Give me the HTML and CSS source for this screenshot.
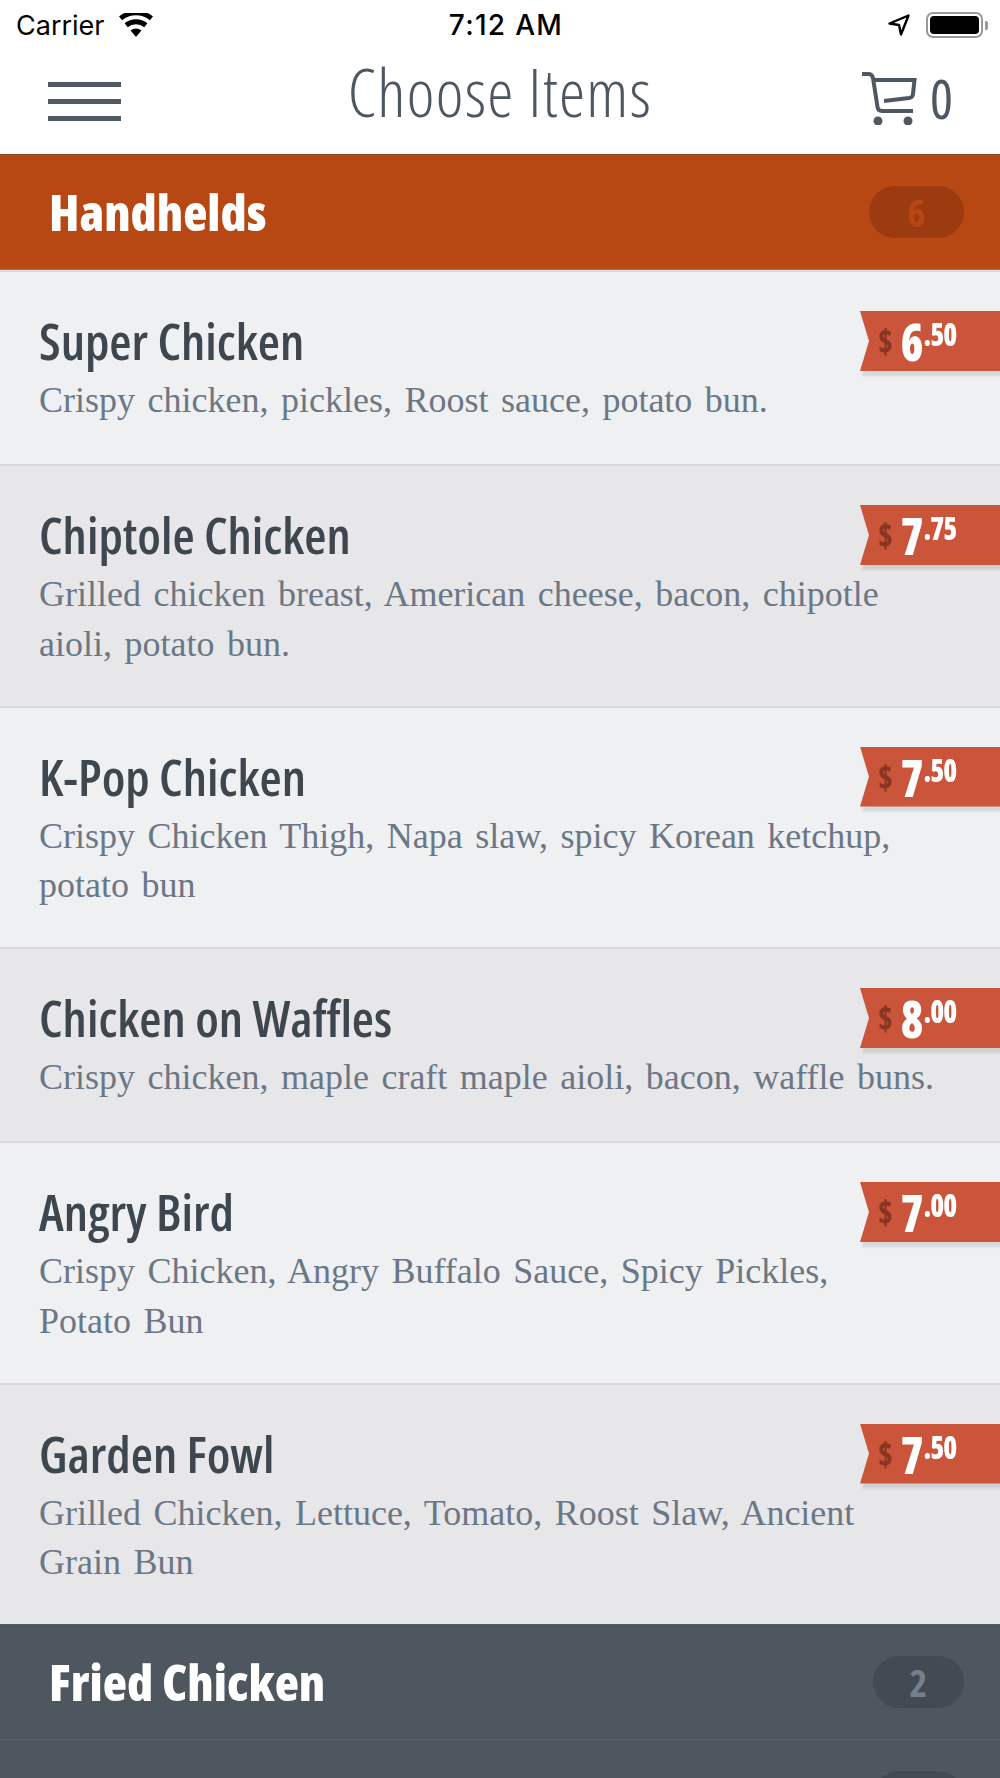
FILE: index.html
```html
<!DOCTYPE html>
<html lang="en">
<head>
<meta charset="utf-8">
<title>Choose Items</title>
<link rel="stylesheet" href="styles.css">
</head>
<body>
<div class="status">
  <div class="status-left"><span>Carrier</span>
    <svg class="wifi" viewBox="0 0 34 24"><path d="M17 24 11.6 17.4a8.6 8.6 0 0 1 10.8 0Z"/><path d="M8.8 14.2 5.6 10.3a18 18 0 0 1 22.8 0l-3.200 3.900a13 13 0 0 0-16.400 0Z"/><path d="M3.100 7.300 0 3.500a26.800 26.800 0 0 1 34 0l-3.100 3.800a22 22 0 0 0-27.800 0Z"/></svg>
  </div>
  <div class="status-time">7:12 AM</div>
  <div class="status-right">
    <svg class="loc" viewBox="0 0 22 22"><path d="M1.500 9.500 20.500 1.500 13 20.500 11 11Z" fill="none" stroke="#000" stroke-width="2.400" stroke-linejoin="round"/></svg>
    <div class="battery"><div class="battery-fill"></div></div><div class="battery-nub"></div>
  </div>
</div>
<header class="nav">
  <div class="burger"><i></i><i></i><i></i></div>
  <h1 class="nav-title">Choose Items</h1>
  <div class="cart">
    <svg class="cart-icon" viewBox="0 0 56 54"><path d="M1 3H7C10 3 11.500 4 12 7L16.500 36C16.800 38 18 40 21 40H52M13 9H53.500L52 23C51.800 26 50.500 26.500 48 27L23 30" fill="none" stroke="#4e5862" stroke-width="4"/><circle cx="17" cy="50" r="4.500" fill="#4e5862"/><circle cx="47" cy="50" r="4.500" fill="#4e5862"/></svg>
    <span class="cart-count">0</span>
  </div>
</header>
<main>
  <section class="sec sec-orange"><h2 class="sec-name">Handhelds</h2><span class="pill">6</span></section>
  <article class="item">
    <h3 class="item-name">Super Chicken</h3>
    <p class="item-desc">Crispy chicken, pickles, Roost sauce, potato bun.</p>
    <div class="tag-wrap"><div class="tag"><div class="price"><span class="cur">$</span><span class="big">6</span><span class="cents">.50</span></div></div></div>
  </article>
  <article class="item alt two-line">
    <h3 class="item-name">Chiptole Chicken</h3>
    <p class="item-desc">Grilled chicken breast, American cheese, bacon, chipotle<br>aioli, potato bun.</p>
    <div class="tag-wrap"><div class="tag"><div class="price"><span class="cur">$</span><span class="big">7</span><span class="cents">.75</span></div></div></div>
  </article>
  <article class="item two-line">
    <h3 class="item-name">K-Pop Chicken</h3>
    <p class="item-desc">Crispy Chicken Thigh, Napa slaw, spicy Korean ketchup,<br>potato bun</p>
    <div class="tag-wrap"><div class="tag"><div class="price"><span class="cur">$</span><span class="big">7</span><span class="cents">.50</span></div></div></div>
  </article>
  <article class="item alt">
    <h3 class="item-name">Chicken on Waffles</h3>
    <p class="item-desc">Crispy chicken, maple craft maple aioli, bacon, waffle buns.</p>
    <div class="tag-wrap"><div class="tag"><div class="price"><span class="cur">$</span><span class="big">8</span><span class="cents">.00</span></div></div></div>
  </article>
  <article class="item two-line">
    <h3 class="item-name">Angry Bird</h3>
    <p class="item-desc">Crispy Chicken, Angry Buffalo Sauce, Spicy Pickles,<br>Potato Bun</p>
    <div class="tag-wrap"><div class="tag"><div class="price"><span class="cur">$</span><span class="big">7</span><span class="cents">.00</span></div></div></div>
  </article>
  <article class="item alt two-line">
    <h3 class="item-name">Garden Fowl</h3>
    <p class="item-desc">Grilled Chicken, Lettuce, Tomato, Roost Slaw, Ancient<br>Grain Bun</p>
    <div class="tag-wrap"><div class="tag"><div class="price"><span class="cur">$</span><span class="big">7</span><span class="cents">.50</span></div></div></div>
  </article>
  <section class="sec sec-slate"><h2 class="sec-name">Fried Chicken</h2><span class="pill">2</span></section>
  <section class="sec sec-slate"><h2 class="sec-name"></h2><span class="pill"></span></section>
</main>
</body>
</html>
```

FILE: styles.css
```css
* { box-sizing: border-box; margin: 0; padding: 0; }
html, body { height: 1778px; overflow: hidden; background: #fff; }
body { font-family: "Open Sans", "Liberation Sans", sans-serif; }

.status { height: 50px; display: flex; align-items: center; justify-content: space-between; padding: 0 12px 0 16px; position: relative; font-family: "Inter", "Liberation Sans", sans-serif; color: #000; }
.status-left { display: flex; align-items: center; gap: 14px; font-size: 27px; }
.wifi { width: 34px; height: 24px; fill: #000; }
.status-time { position: absolute; left: 0; right: 0; padding-left: 12px; text-align: center; font-size: 28px; font-weight: 500; letter-spacing: 1.3px; }
.status-right { display: flex; align-items: center; }
.loc { width: 22px; height: 22px; margin-right: 16px; }
.battery { width: 57px; height: 26px; border: 2px solid #999; border-radius: 7px; padding: 2px; }
.battery-fill { height: 100%; background: #000; border-radius: 4px; }
.battery-nub { width: 3px; height: 9px; background: #999; margin-left: 2px; border-radius: 0 2px 2px 0; }

.nav { height: 105px; display: flex; align-items: center; justify-content: space-between; padding: 0 47px 8px 48px; position: relative; border-bottom: 1px solid #8a4a2a; }
.burger { width: 73px; height: 39px; display: flex; flex-direction: column; justify-content: space-between; margin-top: 6px; }
.burger i { display: block; height: 5px; background: #505a64; }
.nav-title { position: absolute; left: 0; right: 0; text-align: center; font-size: 66px; line-height: 80px; padding-bottom: 14px; font-weight: 300; font-stretch: 75%; letter-spacing: 1.3px; color: #4d5761; }
.cart { display: flex; align-items: center; gap: 13px; }
.cart-icon { width: 56px; height: 54px; }
.cart-count { font-size: 54px; line-height: 54px; font-weight: 500; font-stretch: 75%; color: #4e5862; }

.sec { height: 115px; display: flex; align-items: center; justify-content: space-between; padding: 0 36px 0 49px; }
.sec-orange { background: #b84813; border-bottom: 1px solid #c8643c; }
.sec-slate { background: #4e5660; border-top: 1px solid #565e68; }
.sec-name { font-size: 50px; line-height: 60px; font-weight: 800; font-stretch: 75%; color: #fff; }
.pill { width: 95px; height: 52px; border-radius: 26px; display: flex; align-items: center; justify-content: center; font-size: 38px; font-weight: 700; font-stretch: 75%; }
.sec-orange .pill { background: #9c3b10; color: #b84813; }
.sec-slate .pill { width: 91px; background: #434a53; color: #74808c; }

.item { position: relative; background: #eff0f2; border-top: 2px solid #d8d9db; padding: 33px 40px 38.5px 39px; }
.item.alt { background: #e7e7e9; }
.item.two-line { padding-bottom: 36.5px; }
.item-name { font-size: 51px; line-height: 71px; font-weight: 600; font-stretch: 75%; color: #3e464e; }
.item-desc { font-family: "Liberation Serif", serif; font-size: 36px; line-height: 49.5px; color: #6c7785; word-spacing: 3.5px; }

.tag-wrap { position: absolute; top: 39px; right: 0; filter: drop-shadow(2px 5px 1px rgba(0, 0, 0, .1)); }
.tag { width: 140px; height: 60px; background: #ca553b; clip-path: polygon(0 0, 100% 0, 100% 100%, 0 100%, 9px 50%); padding-left: 18px; }
.price { display: flex; align-items: flex-start; transform: scaleX(.88); transform-origin: left; font-stretch: 75%; font-weight: 800; color: #fff; }
.cur { font-size: 34px; line-height: 60px; color: #8a3522; margin-right: 9px; }
.big { font-size: 52px; line-height: 60px; }
.cents { font-size: 32px; line-height: 45px; letter-spacing: -1px; }
```
